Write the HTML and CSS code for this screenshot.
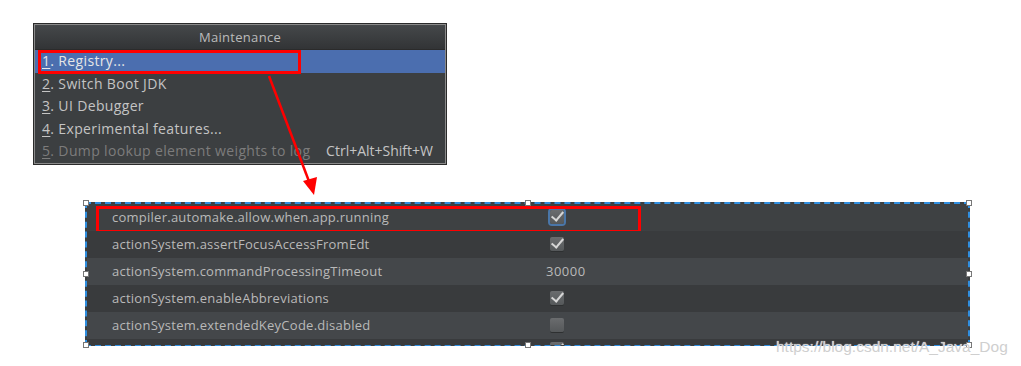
FILE: index.html
```html
<!DOCTYPE html>
<html lang="en">
<head>
  <meta charset="UTF-8">
  <title>Maintenance - Registry</title>
  <link rel="stylesheet" href="styles.css">
</head>
<body>

<div class="page">
  <div class="menu">
    <div class="menu-title">Maintenance</div>
    <ul class="menu-items">
      <li class="item selected"><span><u>1</u>. Registry...</span><span class="mark mark-registry"></span></li>
      <li class="item"><span><u>2</u>. Switch Boot JDK</span></li>
      <li class="item"><span><u>3</u>. UI Debugger</span></li>
      <li class="item"><span><u>4</u>. Experimental features...</span></li>
      <li class="item disabled"><span class="label"><u>5</u>. Dump lookup element weights to log</span><span class="shortcut">Ctrl+Alt+Shift+W</span></li>
    </ul>
  </div>

  <div class="registry">
    <div class="row">
      <span class="key">compiler.automake.allow.when.app.running</span>
      <span class="value"><span class="checkbox checked focused"></span></span>
      <span class="mark mark-row"></span>
    </div>
    <div class="row">
      <span class="key">actionSystem.assertFocusAccessFromEdt</span>
      <span class="value"><span class="checkbox checked"></span></span>
    </div>
    <div class="row">
      <span class="key">actionSystem.commandProcessingTimeout</span>
      <span class="value">30000</span>
    </div>
    <div class="row">
      <span class="key">actionSystem.enableAbbreviations</span>
      <span class="value"><span class="checkbox checked"></span></span>
    </div>
    <div class="row">
      <span class="key">actionSystem.extendedKeyCode.disabled</span>
      <span class="value"><span class="checkbox"></span></span>
    </div>
    <div class="row">
      <span class="key"></span>
      <span class="value"><span class="checkbox checked"></span></span>
    </div>

    <span class="handle h-tl"></span>
    <span class="handle h-tc"></span>
    <span class="handle h-tr"></span>
    <span class="handle h-ml"></span>
    <span class="handle h-mr"></span>
    <span class="handle h-bl"></span>
    <span class="handle h-bc"></span>
    <span class="handle h-br"></span>
  </div>

  <svg class="arrow" width="1021" height="366" viewBox="0 0 1021 366">
    <line x1="269" y1="76" x2="310" y2="184" stroke="#f00" stroke-width="2.5"/>
    <polygon points="314,195 303,181 317,177" fill="#f00"/>
  </svg>

  <div class="watermark">https://blog.csdn.net/A_Java_Dog</div>
</div>

</body>
</html>
```

FILE: styles.css
```css
body {
  margin: 0;
  background: #fff;
  font-family: 'Open Sans', 'Noto Sans', sans-serif;
}

.page {
  position: relative;
  width: 1021px;
  height: 366px;
  padding: 24px 0 0 34px;
  box-sizing: border-box;
  overflow: hidden;
}

/* popup menu */
.menu {
  width: 412px;
  background: #3c3f41;
  border: 1px solid #8a8a8a;
  box-shadow: 0 0 0 1px #2b2b2b;
  box-sizing: border-box;
}

.menu-title {
  height: 24px;
  line-height: 24px;
  text-align: center;
  color: #bbbbbb;
  font-size: 13px;
  letter-spacing: 0.3px;
  background: linear-gradient(#45484a, #323436);
  border-bottom: 1px solid #2b2b2b;
}

.menu-items {
  list-style: none;
  margin: 0;
  padding: 0;
}

.item {
  position: relative;
  display: flex;
  justify-content: space-between;
  height: 22.5px;
  line-height: 22.5px;
  padding: 0 12px 0 7px;
  color: #c4c4c4;
  font-size: 14px;
  letter-spacing: 0.35px;
  white-space: nowrap;
}

.item u {
  text-decoration-thickness: 1px;
  text-underline-offset: 2px;
}

.selected {
  background: #4b6eaf;
  color: #e6e6e6;
}

.disabled {
  color: #7c7c7c;
}

.disabled .label {
  width: 279px;
  overflow: hidden;
}

.shortcut {
  color: #c4c4c4;
  letter-spacing: 0;
}

/* red annotation boxes */
.mark {
  position: absolute;
  border: 3px solid #f00;
  box-sizing: border-box;
}

.mark-registry {
  left: 3px;
  top: 0;
  width: 263px;
  height: 24px;
}

.mark-row {
  left: 9px;
  top: 2px;
  width: 545px;
  height: 27px;
}

/* registry table */
.registry {
  position: relative;
  width: 885px;
  height: 144px;
  margin: 38px 0 0 51px;
  background: #3c3f41;
  border: 2px dashed #2f8ee0;
  box-sizing: border-box;
}

.row {
  position: relative;
  display: grid;
  grid-template-columns: 434px 1fr;
  height: 27px;
  align-items: center;
  padding-left: 25px;
  font-size: 13px;
  letter-spacing: 0.25px;
  color: #b9b9b9;
  overflow: hidden;
}

.row:nth-child(odd) {
  background: #3e4143;
}

.row:nth-child(even) {
  background: #393b3d;
}

.row:nth-child(3),
.row:nth-child(5) {
  background: #44474a;
}

.row:last-of-type {
  height: 6px;
  align-items: start;
  background: #393b3d;
}

.value {
  display: flex;
  align-items: center;
  letter-spacing: 0.5px;
}

.checkbox {
  display: inline-block;
  width: 14px;
  height: 14px;
  margin-left: 4px;
  border-radius: 2px;
  background: linear-gradient(#6a6c6e, #55585a);
  box-shadow: 0 1px 0 #2e3031;
  position: relative;
}

.checkbox.checked::after {
  content: "";
  position: absolute;
  left: 4px;
  top: -1px;
  width: 5px;
  height: 10px;
  border: solid #d6d6d6;
  border-width: 0 2px 2px 0;
  transform: rotate(40deg);
}

.checkbox.focused {
  box-shadow: 0 0 0 2px #4a76a8;
}

.row:last-of-type .checkbox {
  margin-top: 3px;
}

.handle {
  position: absolute;
  width: 6px;
  height: 6px;
  background: #fff;
  border: 1px solid #777;
  box-sizing: border-box;
}

.h-tl { left: -4px; top: -4px; }
.h-tc { left: 438px; top: -4px; }
.h-tr { right: -4px; top: -4px; }
.h-ml { left: -4px; top: 67px; }
.h-mr { right: -4px; top: 67px; }
.h-bl { left: -4px; bottom: -4px; }
.h-bc { left: 438px; bottom: -4px; }
.h-br { right: -4px; bottom: -4px; }

.arrow {
  position: absolute;
  left: 0;
  top: 0;
  pointer-events: none;
}

.watermark {
  position: absolute;
  left: 776px;
  top: 338px;
  font-family: 'Liberation Sans', Arial, sans-serif;
  font-size: 15.5px;
  color: #cfcfcf;
  text-shadow: 0 0 1px #fff;
}
```
